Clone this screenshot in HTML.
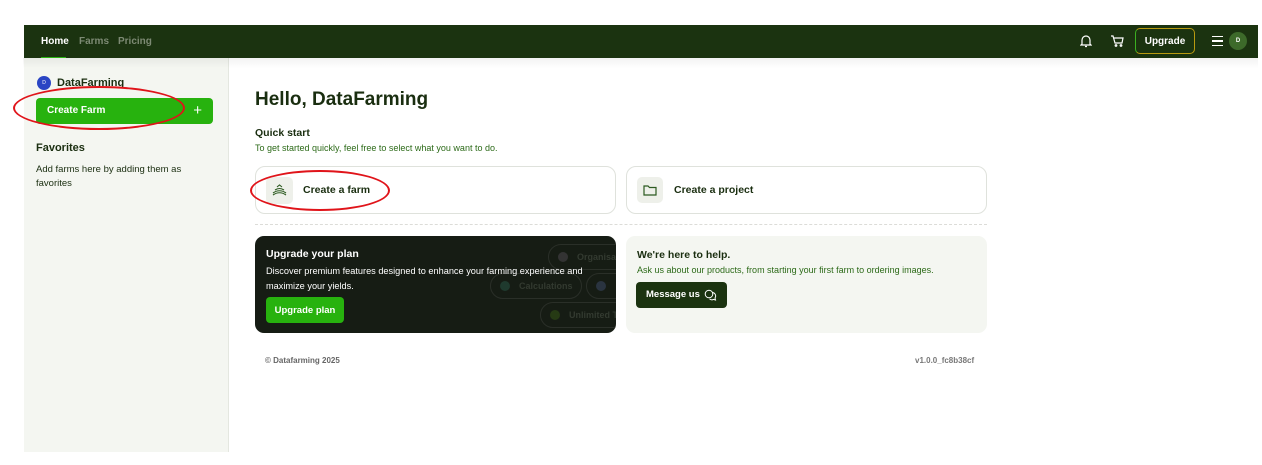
<!DOCTYPE html>
<html><head><meta charset="utf-8"><style>
*{box-sizing:border-box;margin:0;padding:0}
body{width:1262px;height:465px;background:#fff;font-family:"Liberation Sans",sans-serif;position:relative;overflow:hidden;color:#1a2e10}
.a{position:absolute}
.nav{left:24px;top:25px;width:1234px;height:33px;background:#1b3310}
.side{left:24px;top:58px;width:205px;height:394px;background:#f4f6f1;border-right:1px solid #e4e7e0}
.card{border:1px solid #dfe2dc;border-radius:10px;background:#fff}
.ell{border:2px solid #e0141a;border-radius:50%}
.c{display:flex;align-items:center;justify-content:center}
</style></head><body>
<div class="a nav"></div>
<div class="a" style="left:41px;top:36px;font-size:10px;font-weight:bold;color:#fff">Home</div>
<div class="a" style="left:41px;top:57px;width:25px;height:2px;background:#2ab512"></div>
<div class="a" style="left:79px;top:36px;font-size:10px;font-weight:bold;color:#7d8a74">Farms</div>
<div class="a" style="left:118px;top:36px;font-size:10px;font-weight:bold;color:#7d8a74">Pricing</div>
<svg class="a" style="left:1080px;top:34px" width="12" height="14" viewBox="0 0 12 14" fill="none" stroke="#fff" stroke-width="1.2"><path d="M2 10V6a4 4 0 018 0v4l1 1H1z M5 12.5h2"/></svg>
<svg class="a" style="left:1110px;top:35px" width="14" height="12" viewBox="0 0 14 12" fill="none" stroke="#fff" stroke-width="1.2"><path d="M1 1h2l2 7h7l1-5H4"/><circle cx="6" cy="10.5" r=".8"/><circle cx="11" cy="10.5" r=".8"/></svg>
<div class="a c" style="left:1135px;top:28px;width:60px;height:26px;border:1.5px solid #b89a10;border-left-color:#3bb020;border-radius:5px;color:#fff;font-size:10px;font-weight:bold">Upgrade</div>
<div class="a" style="left:1212px;top:36px;width:11px;height:10px;border-top:1.5px solid #fff;border-bottom:1.5px solid #fff"></div>
<div class="a" style="left:1212px;top:40px;width:11px;height:1.5px;background:#fff"></div>
<div class="a c" style="left:1229px;top:32px;width:18px;height:18px;border-radius:50%;background:#3d6a2a;color:#fff;font-size:6px;font-weight:bold">D</div>
<div class="a side"></div>
<div class="a c" style="left:37px;top:76px;width:14px;height:14px;border-radius:50%;background:#2a45c4;color:#fff;font-size:5px">D</div>
<div class="a" style="left:57px;top:77px;font-size:11px;font-weight:bold">DataFarming</div>
<div class="a" style="left:36px;top:98px;width:177px;height:26px;background:#27b20e;border-radius:4px;color:#fff;font-size:10px;font-weight:bold;line-height:26px;padding-left:11px">Create Farm<span style="position:absolute;right:11px;top:0;font-size:15px;font-weight:normal">+</span></div>
<div class="a ell" style="left:13px;top:86px;width:172px;height:44px"></div>
<div class="a" style="left:36px;top:142px;font-size:11px;font-weight:bold">Favorites</div>
<div class="a" style="left:36px;top:163px;font-size:9.5px;line-height:14px;width:170px">Add farms here by adding them as favorites</div>
<div class="a" style="left:23px;top:58px;width:1235px;height:10px;background:linear-gradient(#0000000d,#0000)"></div>
<div class="a" style="left:255px;top:89px;font-size:19px;font-weight:bold">Hello, DataFarming</div>
<div class="a" style="left:255px;top:127px;font-size:10.5px;font-weight:bold">Quick start</div>
<div class="a" style="left:255px;top:143px;font-size:9px;color:#2c6a18">To get started quickly, feel free to select what you want to do.</div>
<div class="a card" style="left:255px;top:166px;width:361px;height:48px"></div>
<div class="a" style="left:266px;top:177px;width:27px;height:27px;border-radius:5px;background:#eef0ea"></div>
<svg class="a" style="left:272px;top:184px" width="15" height="13" viewBox="0 0 15 13" fill="none" stroke="#2c5a20" stroke-width="1.1"><path d="M1 9c4-3 9-3 13 0M1 11c4-3 9-3 13 0M3 6c3-2 6-2 9 0M5 3l2.5-2 2.5 2"/></svg>
<div class="a" style="left:303px;top:184px;font-size:10.5px;font-weight:bold">Create a farm</div>
<div class="a ell" style="left:250px;top:170px;width:140px;height:41px"></div>
<div class="a card" style="left:626px;top:166px;width:361px;height:48px"></div>
<div class="a" style="left:637px;top:177px;width:26px;height:26px;border-radius:5px;background:#eef0ea"></div>
<svg class="a" style="left:643px;top:184px" width="14" height="12" viewBox="0 0 14 12" fill="none" stroke="#2c5a20" stroke-width="1.2"><path d="M1 2h4l1.5 1.5H13V11H1z"/></svg>
<div class="a" style="left:674px;top:184px;font-size:10.5px;font-weight:bold">Create a project</div>
<div class="a" style="left:255px;top:224px;width:732px;border-top:1px dashed #dcdcd8"></div>
<div class="a" style="left:255px;top:236px;width:361px;height:97px;background:#161c14;border-radius:9px;overflow:hidden">
<div class="a" style="left:293px;top:8px;width:90px;height:26px;border:1px solid #2a2f28;border-radius:13px;color:#333a30;font-size:9px;font-weight:bold;line-height:24px;padding-left:28px">Organisa<span style="position:absolute;left:9px;top:7px;width:10px;height:10px;border-radius:50%;background:#333"></span></div>
<div class="a" style="left:235px;top:37px;width:92px;height:26px;border:1px solid #2a2f28;border-radius:13px;color:#333a30;font-size:9px;font-weight:bold;line-height:24px;padding-left:28px">Calculations<span style="position:absolute;left:9px;top:7px;width:10px;height:10px;border-radius:50%;background:#1f3a2e"></span></div>
<div class="a" style="left:331px;top:37px;width:60px;height:26px;border:1px solid #2a2f28;border-radius:13px"><span style="position:absolute;left:9px;top:7px;width:10px;height:10px;border-radius:50%;background:#2a3440"></span></div>
<div class="a" style="left:285px;top:66px;width:100px;height:26px;border:1px solid #2a2f28;border-radius:13px;color:#333a30;font-size:9px;font-weight:bold;line-height:24px;padding-left:28px">Unlimited T<span style="position:absolute;left:9px;top:7px;width:10px;height:10px;border-radius:50%;background:#263a14"></span></div>
</div>
<div class="a" style="left:266px;top:248px;font-size:10.5px;font-weight:bold;color:#fff">Upgrade your plan</div>
<div class="a" style="left:266px;top:264px;font-size:9.2px;line-height:14.5px;color:#fff;width:345px">Discover premium features designed to enhance your farming experience and maximize your yields.</div>
<div class="a c" style="left:266px;top:297px;width:78px;height:26px;background:#27b20e;border-radius:4px;color:#fff;font-size:9.5px;font-weight:bold">Upgrade plan</div>
<div class="a" style="left:626px;top:236px;width:361px;height:97px;background:#f4f6f1;border-radius:9px"></div>
<div class="a" style="left:637px;top:249px;font-size:10.5px;font-weight:bold">We're here to help.</div>
<div class="a" style="left:637px;top:265px;font-size:9px;color:#2c6a18">Ask us about our products, from starting your first farm to ordering images.</div>
<div class="a" style="left:636px;top:282px;width:91px;height:26px;background:#1b3310;border-radius:4px;color:#fff;font-size:9.5px;font-weight:bold;line-height:26px;padding-left:10px">Message us</div>
<svg class="a" style="left:704px;top:289px" width="13" height="12" viewBox="0 0 13 12" fill="none" stroke="#fff" stroke-width="1"><circle cx="5" cy="5" r="3.8"/><path d="M8 3.5a3.5 3.5 0 013 5.5l.5 2-2-.6a3.5 3.5 0 01-4-.6"/></svg>
<div class="a" style="left:265px;top:356px;font-size:8px;font-weight:bold;color:#666">© Datafarming 2025</div>
<div class="a" style="left:915px;top:356px;font-size:8px;font-weight:bold;color:#777">v1.0.0_fc8b38cf</div>
</body></html>
